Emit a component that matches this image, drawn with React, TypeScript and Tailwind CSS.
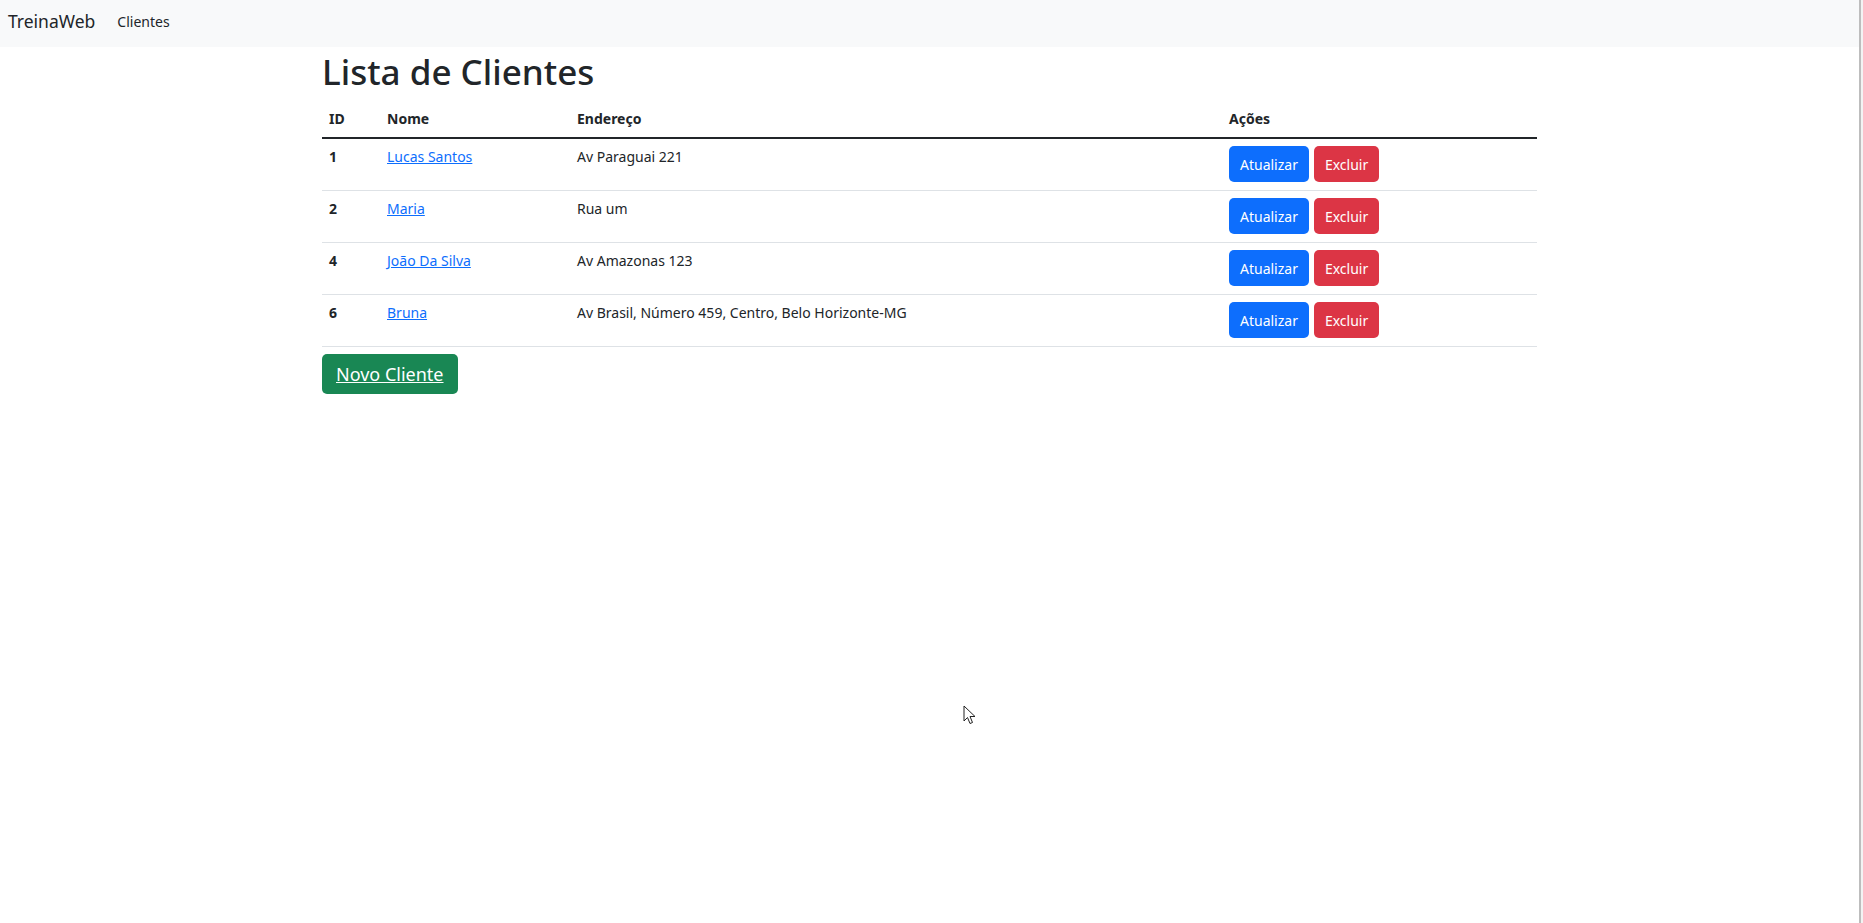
const clientes = [
  { id: 1, nome: "Lucas Santos", endereco: "Av Paraguai 221" },
  { id: 2, nome: "Maria", endereco: "Rua um" },
  { id: 4, nome: "João Da Silva", endereco: "Av Amazonas 123" },
  { id: 6, nome: "Bruna", endereco: "Av Brasil, Número 459, Centro, Belo Horizonte-MG" },
];

const font = { fontFamily: '"Noto Sans", "Open Sans", Arial, sans-serif' };

const App = () => {
  return (
    <div className="min-h-screen flex bg-white text-[#212529]" style={font}>
      <div className="flex-1 relative">
        {/* Navbar */}
        <nav className="h-[47px] bg-[#f8f9fa] flex items-center px-[8px] pb-[5px]">
          <span className="text-[17.5px] mr-[22px]">TreinaWeb</span>
          <span className="text-[14px] text-[#212529]">Clientes</span>
        </nav>

        <main className="w-[1215px] mx-auto">
          <h1 className="text-[35px] font-medium leading-[1.2] mt-[4px] mb-[7px]">Lista de Clientes</h1>

          <table className="w-full text-[14px] leading-[21px] table-fixed border-collapse">
            <colgroup>
              <col className="w-[58px]" />
              <col className="w-[190px]" />
              <col className="w-[652px]" />
              <col className="w-[315px]" />
            </colgroup>
            <thead>
              <tr className="border-b-2 border-[#212529] text-left">
                <th className="px-[7px] pt-[8px] pb-[8px] font-bold">ID</th>
                <th className="px-[7px] pt-[8px] pb-[8px] font-bold">Nome</th>
                <th className="px-[7px] pt-[8px] pb-[8px] font-bold">Endereço</th>
                <th className="px-[7px] pt-[8px] pb-[8px] font-bold">Ações</th>
              </tr>
            </thead>
            <tbody>
              {clientes.map((c) => (
                <tr key={c.id} className="border-b border-[#dee2e6] align-top">
                  <th className="px-[7px] pt-[7px] pb-[7px] text-left font-bold">{c.id}</th>
                  <td className="px-[7px] pt-[7px] pb-[7px]">
                    <a href="#" className="text-[#0d6efd] underline">{c.nome}</a>
                  </td>
                  <td className="px-[7px] pt-[7px] pb-[7px]">{c.endereco}</td>
                  <td className="px-[7px] pt-[7px] pb-[8px]">
                    <div className="flex gap-[5px]">
                      <button className="h-[36px] px-[11px] rounded-[5px] bg-[#0d6efd] text-white text-[14px]">
                        Atualizar
                      </button>
                      <button className="h-[36px] px-[11px] rounded-[5px] bg-[#dc3545] text-white text-[14px]">
                        Excluir
                      </button>
                    </div>
                  </td>
                </tr>
              ))}
            </tbody>
          </table>

          <button className="mt-[7px] h-[40px] px-[14px] rounded-[5px] bg-[#198754] text-white text-[18px] underline">
            Novo Cliente
          </button>
        </main>

        {/* mouse pointer */}
        <svg className="absolute left-[963px] top-[705px]" width="13" height="20" viewBox="0 0 13 20">
          <path d="M1 1 L1 16 L4.5 12.5 L7 18.5 L9.5 17.5 L7 11.5 L12 11.5 Z" fill="#fff" stroke="#222" strokeWidth="1" />
        </svg>
      </div>
      <div className="w-[4px] border-l-2 border-[#bdbdbd] bg-[#f3f3f3]" />
    </div>
  );
};

export default App;
